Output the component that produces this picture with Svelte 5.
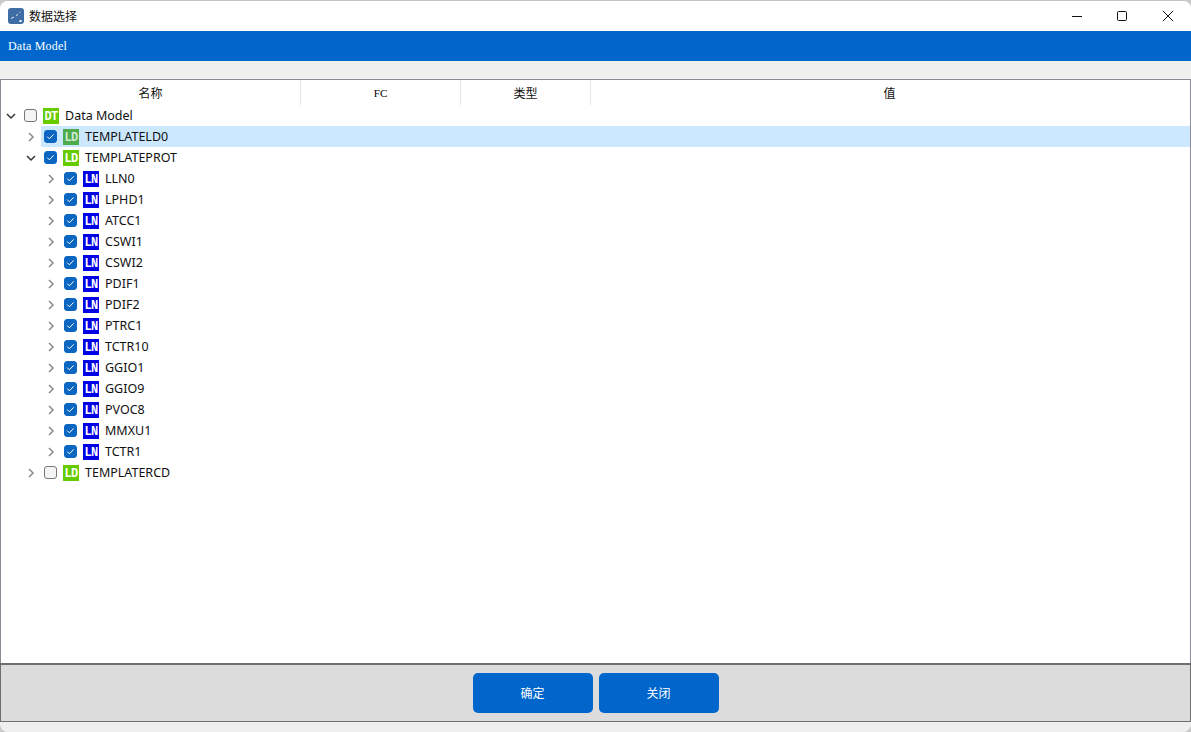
<script>
  const lns = ['LLN0','LPHD1','ATCC1','CSWI1','CSWI2','PDIF1','PDIF2','PTRC1','TCTR10','GGIO1','GGIO9','PVOC8','MMXU1','TCTR1'];
  const rows = [
    { d: 0, open: true, checked: false, tag: 'DT', label: 'Data Model' },
    { d: 1, open: false, checked: true, tag: 'LD', label: 'TEMPLATELD0', sel: true },
    { d: 1, open: true, checked: true, tag: 'LD', label: 'TEMPLATEPROT' },
    ...lns.map((label) => ({ d: 2, open: false, checked: true, tag: 'LN', label })),
    { d: 1, open: false, checked: false, tag: 'LD', label: 'TEMPLATERCD' }
  ];
</script>

<div class="window">
  <header class="titlebar">
    <svg class="appicon" width="16" height="16" viewBox="0 0 16 16">
      <rect width="16" height="16" rx="3" fill="#3f6ea6"/>
      <path d="M3 10.5 6 9 M8 7.5 10 6.5 M11.5 4.5 12.5 4" stroke="#dce6f2" stroke-width="1" fill="none"/>
      <path d="M11.5 12h2v2h-2z" fill="#fff"/>
    </svg>
    <span class="title">数据选择</span>
    <div class="controls">
      <span class="ctl"><svg width="12" height="12" viewBox="0 0 12 12"><path d="M1 6.5h10" stroke="#111" stroke-width="1"/></svg></span>
      <span class="ctl"><svg width="12" height="12" viewBox="0 0 12 12"><rect x="1.5" y="1.5" width="9" height="9" rx="1.2" fill="none" stroke="#111"/></svg></span>
      <span class="ctl"><svg width="12" height="12" viewBox="0 0 12 12"><path d="M1 1l10 10M11 1L1 11" stroke="#111" stroke-width="1"/></svg></span>
    </div>
  </header>
  <div class="banner">Data Model</div>
  <div class="gap"></div>
  <main class="panel">
    <div class="thead">
      <div class="th cjk c1">名称</div>
      <div class="th mono c2">FC</div>
      <div class="th cjk c3">类型</div>
      <div class="th cjk c4">值</div>
    </div>
    <div class="tree">
      {#each rows as r}
        <div class="row" class:d1={r.d === 1} class:d2={r.d === 2}>
          <svg class="chev" class:open={r.open} width="10" height="10" viewBox="0 0 10 10">
            {#if r.open}
              <path d="M1 3l4 4 4-4" fill="none" stroke="#333" stroke-width="1.5"/>
            {:else}
              <path d="M3 1l4 4-4 4" fill="none" stroke="#8a8a8a" stroke-width="1.5"/>
            {/if}
          </svg>
          <div class="item" class:sel={r.sel}>
            <span class="cb" class:on={r.checked}>
              {#if r.checked}
                <svg width="9" height="9" viewBox="0 0 9 9"><path d="M1.2 4.6l2.2 2.2 4.2-4.4" fill="none" stroke="#fff" stroke-width="1"/></svg>
              {/if}
            </span>
            <span class="tag {r.tag}" class:faded={r.sel}>{r.tag}</span>
            <span class="label">{r.label}</span>
          </div>
        </div>
      {/each}
    </div>
  </main>
  <footer class="foot">
    <button class="btn">确定</button>
    <button class="btn">关闭</button>
  </footer>
  <div class="bottom"></div>
</div>

<style>
  :global(body) { margin: 0; background: #c9c9c9; overflow: hidden; }
  .window {
    width: 1191px; height: 732px; box-sizing: border-box;
    display: flex; flex-direction: column;
    background: #efefef; border-radius: 8px; overflow: hidden;
    border-top: 1px solid #c4c4c4;
    font-family: "Noto Sans", "Noto Sans CJK SC", sans-serif;
  }
  .titlebar { height: 30px; background: #fff; display: flex; align-items: center; padding-left: 8px; flex: none; }
  .appicon { flex: none; }
  .title { margin-left: 5px; margin-bottom: 2px; font: 12px "Noto Sans CJK SC", sans-serif; color: #111; }
  .controls { margin-left: auto; display: flex; }
  .ctl { width: 46px; height: 30px; display: flex; align-items: center; justify-content: center; }
  .ctl:nth-child(1) { margin-right: -1px; }
  .banner {
    height: 30px; box-sizing: border-box; background: #0066cc; color: #fff; flex: none;
    display: flex; align-items: center; padding: 0 0 0 8px;
    font: 12px/14px "Liberation Serif", serif; letter-spacing: 0.2px;
  }
  .gap { height: 18px; flex: none; }
  .panel {
    height: 584px; flex: none; box-sizing: border-box; background: #fff;
    border: 1px solid #8a8c96; border-bottom: none; border-width: 1px 1px 0 1px;
  }
  .thead { display: flex; height: 25px; }
  .th { display: flex; align-items: center; justify-content: center; box-sizing: border-box; border-right: 1px solid #e6e6e6; color: #111; }
  .cjk { font: 12px "Noto Sans CJK SC", sans-serif; }
  .mono { font: 11px/12px "Liberation Serif", serif; padding-top: 1px; color: #000; }
  .c1 { width: 300px; }
  .c2 { width: 160px; }
  .c3 { width: 130px; }
  .c4 { flex: 1; border-right: none; padding-right: 2px; }
  .row { height: 21px; display: flex; align-items: center; padding-left: 5px; }
  .row.d1 { padding-left: 25px; }
  .row.d2 { padding-left: 45px; }
  .chev { flex: none; }
  .item { flex: 1; height: 21px; display: flex; align-items: center; margin-left: 5px; padding-left: 3px; }
  .item.sel { background: #cce8ff; }
  .cb {
    box-sizing: border-box; width: 13px; height: 13px; border: 1px solid #777; border-radius: 3px; background: #f4f4f4;
    display: flex; align-items: center; justify-content: center; flex: none;
  }
  .cb.on { background: #0b66c2; border-color: #0b66c2; }
  .tag {
    width: 16px; height: 16px; margin-left: 6px; flex: none; color: #fff;
    font: bold 12px/18px "Liberation Mono", monospace; text-align: center; letter-spacing: -0.6px;
  }
  .tag.DT, .tag.LD { background: #66cc00; }
  .tag.LN { background: #0000e6; }
  .tag.faded { background: #4dab4d; color: #cde8cd; }
  .label { margin-left: 6px; font-size: 12.5px; color: #111; white-space: nowrap; }
  .foot {
    height: 59px; flex: none; box-sizing: border-box; background: #dcdcdc;
    border: 1px solid #6e6e6e; border-width: 2px 1px 1px 1px;
    display: flex; justify-content: center; align-items: center; gap: 6px; padding-bottom: 1px;
  }
  .btn {
    width: 120px; height: 40px; border: none; border-radius: 5px; background: #0066cc; color: #fff;
    font: 12px "Noto Sans CJK SC", sans-serif; padding: 0;
  }
  .bottom { flex: 1; }
</style>
